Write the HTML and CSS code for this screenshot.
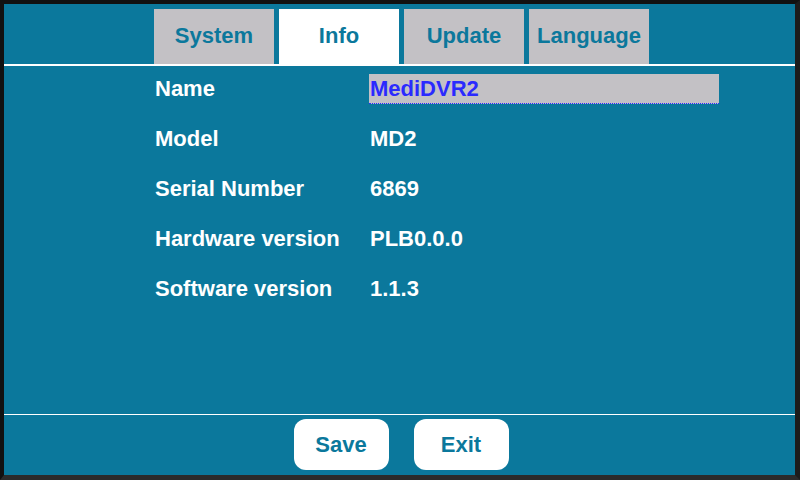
FILE: index.html
```html
<!DOCTYPE html>
<html>
<head>
<meta charset="utf-8">
<link rel="stylesheet" href="styles.css">
</head>
<body>
<div class="screen">
  <div class="tabs">
    <div class="tab">System</div>
    <div class="tab active">Info</div>
    <div class="tab">Update</div>
    <div class="tab">Language</div>
  </div>
  <div class="content">
    <div class="row"><div class="label">Name</div><div class="input">MediDVR2</div></div>
    <div class="row"><div class="label">Model</div><div class="value">MD2</div></div>
    <div class="row"><div class="label">Serial Number</div><div class="value">6869</div></div>
    <div class="row"><div class="label">Hardware version</div><div class="value">PLB0.0.0</div></div>
    <div class="row"><div class="label">Software version</div><div class="value">1.1.3</div></div>
  </div>
  <div class="footer">
    <div class="btn">Save</div>
    <div class="btn">Exit</div>
  </div>
</div>
</body>
</html>
```
FILE: styles.css
```css
html, body {
  margin: 0;
  padding: 0;
  background: #1a1a1a;
}
.screen {
  width: 800px;
  height: 480px;
  box-sizing: border-box;
  border-left: 4px solid #111111;
  border-top: 4px solid #111111;
  border-right: 5px solid #1c1c1c;
  border-bottom: 5px solid #2b2b2b;
  background: #0b789c;
  display: flex;
  flex-direction: column;
  font-family: "Liberation Sans", Arial, sans-serif;
  font-weight: bold;
  font-size: 22px;
}
.tabs {
  display: flex;
  gap: 5px;
  padding: 5px 0 0 150px;
  height: 62px;
  box-sizing: border-box;
  border-bottom: 2px solid #ffffff;
  flex-shrink: 0;
}
.tab {
  width: 120px;
  height: 55px;
  background: #c3c1c5;
  color: #0b789c;
  display: flex;
  align-items: center;
  justify-content: center;
  padding-bottom: 1px;
  box-sizing: border-box;
}
.tab.active {
  background: #ffffff;
  height: 57px;
  margin-bottom: -2px;
  padding-bottom: 3px;
}
.content {
  flex: 1;
  display: flex;
  flex-direction: column;
  gap: 20px;
  padding: 8px 0 0 151px;
  color: #ffffff;
}
.row {
  display: flex;
  align-items: center;
  height: 30px;
}
.label {
  width: 214px;
}
.value {
  padding-left: 1px;
}
.input {
  width: 350px;
  height: 30px;
  box-sizing: border-box;
  background: #c3c1c5;
  color: #2a2aff;
  padding: 1px 0 0 1px;
  border-bottom: 1px dotted #2a2aff;
  display: flex;
  align-items: center;
}
.footer {
  height: 61px;
  flex-shrink: 0;
  box-sizing: border-box;
  border-top: 1px solid #ffffff;
  display: flex;
  justify-content: center;
  gap: 25px;
  padding: 4px 0 0 3px;
}
.btn {
  width: 95px;
  height: 51px;
  background: #ffffff;
  color: #0b789c;
  border-radius: 12px;
  display: flex;
  align-items: center;
  justify-content: center;
}
```
